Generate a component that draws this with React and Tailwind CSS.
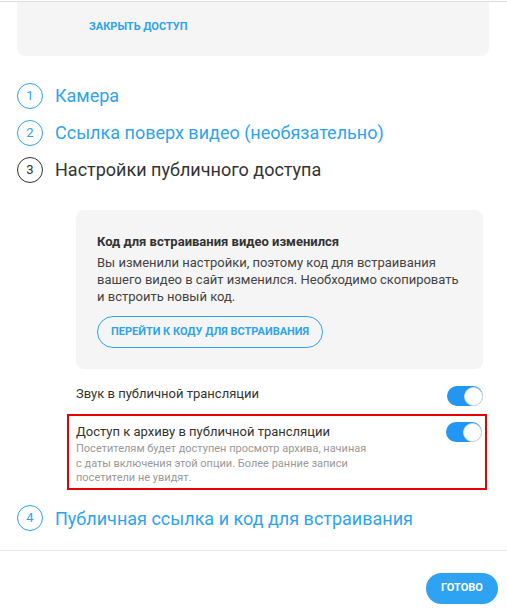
import React from 'react';

const font = { fontFamily: 'Roboto, "Noto Sans", sans-serif' };

const Step = ({ n, label, active }) => (
  <div className="flex h-[37px] items-center">
    <div
      className={`flex h-[26px] w-[26px] items-center justify-center rounded-full border text-[13px] ${
        active ? 'border-[#2ea3f2] text-[#2ea3f2]' : 'border-[#333] text-[#333]'
      }`}
    >
      {n}
    </div>
    <span className={`ml-[12px] text-[18px] ${active ? 'text-[#2ea3f2]' : 'text-[#333]'}`}>{label}</span>
  </div>
);

const Toggle = () => (
  <div className="flex h-[20px] w-[36px] items-center justify-end rounded-full bg-[#2196f3]">
    <div className="h-[19px] w-[19px] rounded-full border border-[#dcdcdc] bg-white" />
  </div>
);

export default function App() {
  return (
    <div className="min-h-screen bg-white text-[#333]" style={font}>
      <div className="pt-px">
        <div className="h-px bg-[#dcdcdc]" />
      </div>
      <div className="px-[17px]">
        <div className="flex h-[54px] w-[472px] items-center rounded-b-lg bg-[#f5f5f5] pb-[4px] pl-[72px]">
          <span className="text-[11px] font-bold text-[#2ea3f2]">ЗАКРЫТЬ ДОСТУП</span>
        </div>
      </div>

      <div className="mt-[21px] px-[17px]">
        <Step n="1" label="Камера" active />
        <Step n="2" label="Ссылка поверх видео (необязательно)" active />
        <Step n="3" label="Настройки публичного доступа" />
      </div>

      <div className="ml-[76px] mr-[24px] mt-[22px]">
        <div className="rounded-lg bg-[#f5f5f5] px-[21px] pb-[21px] pt-[23px]">
          <div className="text-[13px] font-bold leading-[17px] text-[#333]">Код для встраивания видео изменился</div>
          <p className="mt-[4px] text-[13px] leading-[17px] text-[#444]">
            Вы изменили настройки, поэтому код для встраивания
            <br />
            вашего видео в сайт изменился. Необходимо скопировать
            <br />и встроить новый код.
          </p>
          <button className="mt-[11px] flex h-[32px] w-[226px] items-center justify-center rounded-full border border-[#2ea3f2] text-[11px] font-bold text-[#2ea3f2]">
            ПЕРЕЙТИ К КОДУ ДЛЯ ВСТРАИВАНИЯ
          </button>
        </div>

        <div className="mt-[15px] flex items-start justify-between">
          <span className="text-[13px] leading-[20px] text-[#333]">Звук в публичной трансляции</span>
          <div className="mt-[2px]">
            <Toggle />
          </div>
        </div>
      </div>

      <div className="ml-[67px] mr-[20px] mt-[8px] border-2 border-[#e60000] pb-[2px] pl-[7px] pr-[3px] pt-[6px]">
        <div className="flex items-start justify-between">
          <span className="mt-[1px] text-[13px] leading-[17px] text-[#333]">Доступ к архиву в публичной трансляции</span>
          <Toggle />
        </div>
        <p className="mt-0 text-[11px] leading-[14.5px] text-[#999]">
          Посетителям будет доступен просмотр архива, начиная
          <br />с даты включения этой опции. Более ранние записи
          <br />
          посетители не увидят.
        </p>
      </div>

      <div className="mt-[10px] px-[17px]">
        <Step n="4" label="Публичная ссылка и код для встраивания" active />
      </div>

      <div className="mt-[13px] h-px bg-[#e8e8e8]" />

      <div className="flex justify-end pr-[9px] pt-[22px]">
        <button className="flex h-[31px] w-[72px] items-center justify-center rounded-full bg-[#2ea3f2] text-[11px] font-bold text-white">
          ГОТОВО
        </button>
      </div>
    </div>
  );
}
